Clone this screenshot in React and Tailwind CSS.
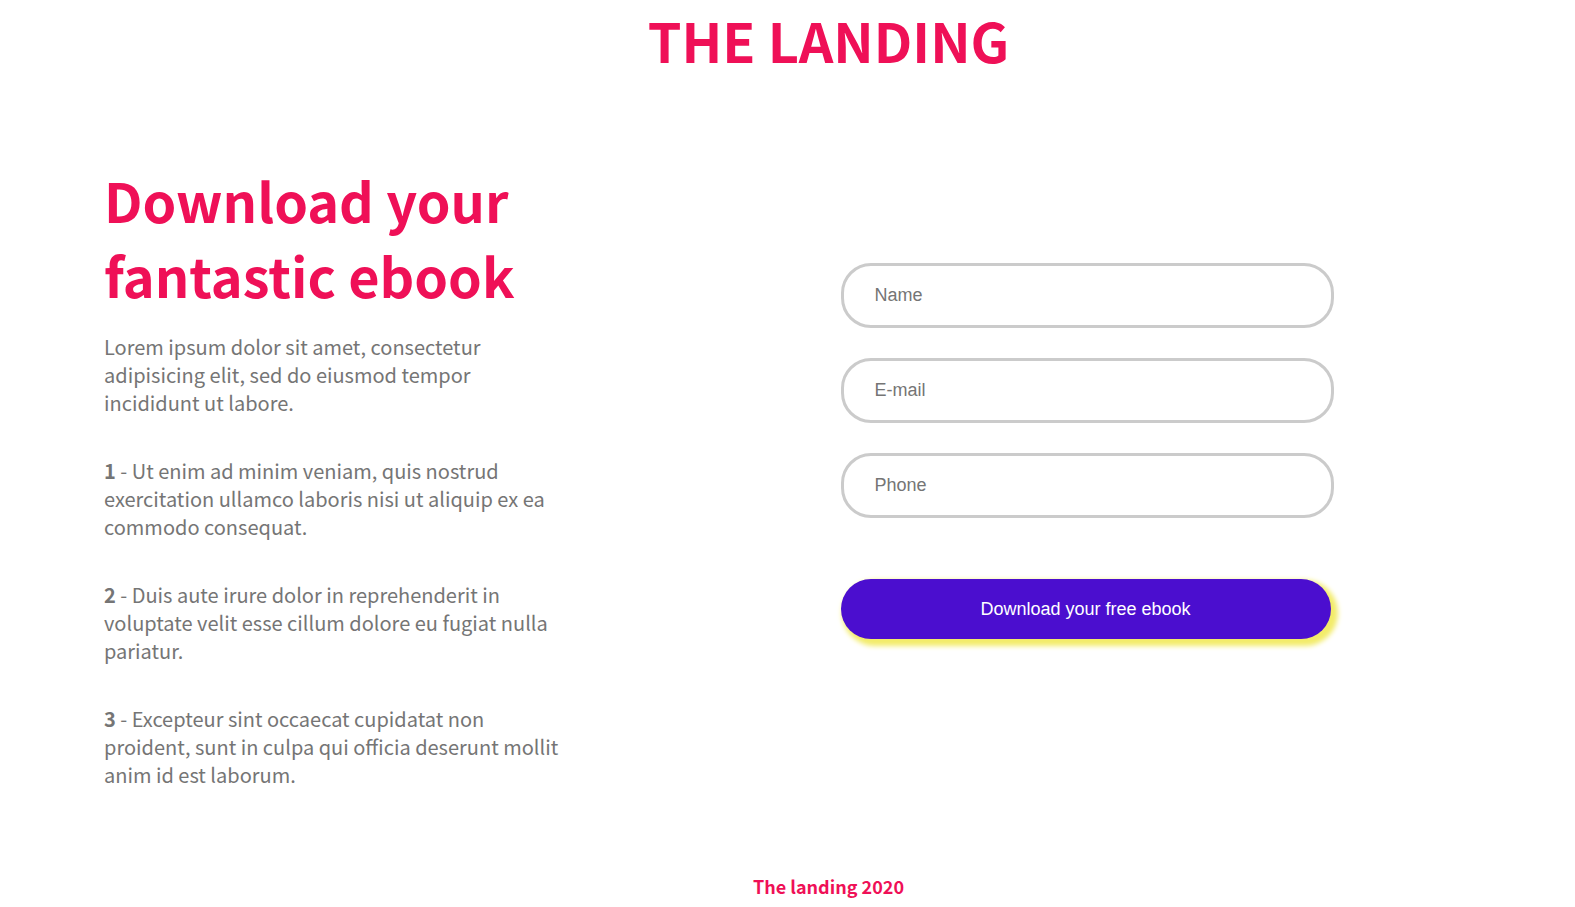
const fields = [
  { id: "name", label: "Name", type: "text" },
  { id: "email", label: "E-mail", type: "email" },
  { id: "phone", label: "Phone", type: "tel" },
];

const points = [
  "Ut enim ad minim veniam, quis nostrud exercitation ullamco laboris nisi ut aliquip ex ea commodo consequat.",
  "Duis aute irure dolor in reprehenderit in voluptate velit esse cillum dolore eu fugiat nulla pariatur.",
  "Excepteur sint occaecat cupidatat non proident, sunt in culpa qui officia deserunt mollit anim id est laborum.",
];

export default function App() {
  return (
    <div className="min-h-screen bg-white pr-[22px] pl-[104px] font-['Source_Sans_Pro','Noto_Sans_CJK_SC',sans-serif] text-[#ef1057]">
      <header className="pt-0.5 text-center">
        <h1 className="text-[54px] leading-[75px] font-bold">THE LANDING</h1>
      </header>

      <main className="mt-[85px] grid grid-cols-2">
        <section>
          <h2 className="text-[54px] leading-[75px] font-bold">
            Download your
            <br />
            fantastic ebook
          </h2>
          <div className="mt-[21px] flex max-w-[456px] flex-col gap-10 text-[20px] leading-7 text-[#757575]">
            <p>
              Lorem ipsum dolor sit amet, consectetur adipisicing elit, sed do
              eiusmod tempor incididunt ut labore.
            </p>
            {points.map((text, i) => (
              <p key={text}>
                <strong className="font-bold">{i + 1}</strong>
                {` - ${text}`}
              </p>
            ))}
          </div>
        </section>

        <form
          className="flex flex-col pt-[101px] pl-3 font-['Liberation_Sans',Arial,sans-serif] text-[18px]"
          onSubmit={(e) => e.preventDefault()}
        >
          <div className="flex max-w-[493px] flex-col gap-[30px]">
            {fields.map((f) => (
              <input
                key={f.id}
                id={f.id}
                name={f.id}
                type={f.type}
                aria-label={f.label}
                placeholder={f.label}
                className="block h-[65px] w-full rounded-[30px] border-[3px] border-[#cbcbcb] px-[31px] text-[#757575] placeholder:text-[#757575] placeholder:opacity-100"
              />
            ))}
          </div>
          <button
            type="submit"
            className="mt-[61px] h-[60px] max-w-[490px] rounded-[30px] bg-[#4b0ecf] text-white shadow-[4px_4px_5px_3px_#f3ec6a]"
          >
            Download your free ebook
          </button>
        </form>
      </main>

      <footer className="mt-[83px] text-center text-[18px] leading-7 font-bold">
        The landing 2020
      </footer>
    </div>
  );
}
